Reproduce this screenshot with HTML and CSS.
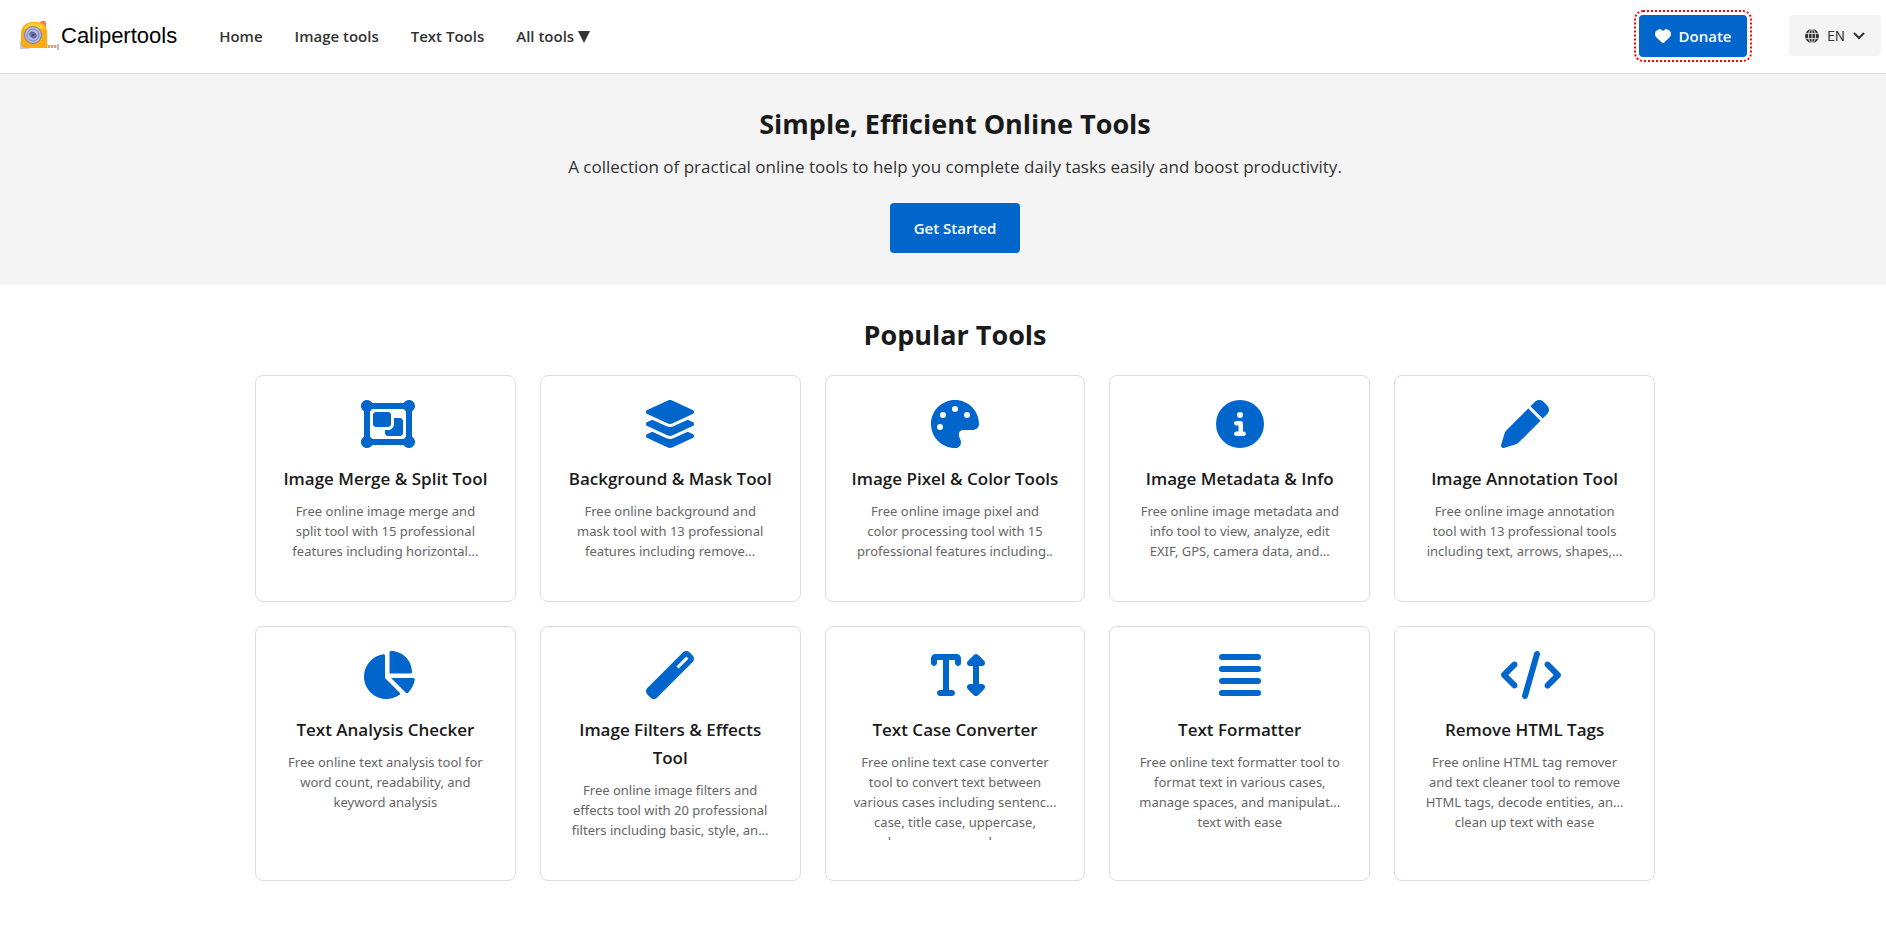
FILE: index.html
```html
<!DOCTYPE html>
<html lang="en">
<head>
  <meta charset="UTF-8" />
  <meta name="viewport" content="width=device-width, initial-scale=1" />
  <title>Calipertools</title>
  <link rel="stylesheet" href="styles.css">
</head>
<body>
  <header class="header">
    <a class="logo" href="#">
      <svg class="logo-icon" viewBox="0 0 40 30" aria-hidden="true">
        <rect x="20" y="0" width="6" height="8" rx="2" fill="#ff7058" />
        <path d="M0 20h7l2 6v2H0z" fill="#c3c6ec" />
        <path d="M1 14C1 5 6 1 13 1h4c6 0 10 4 10 10v10c0 3 2 4 5 4v2H6c-3 0-5-2-5-5z" fill="#fcab12" />
        <path d="M4 8C6 3 9 2 14 2h3c4 0 7 2 8 6z" fill="#ffd02d" />
        <rect x="27" y="24" width="11" height="3" fill="#ffdd9b" />
        <path d="M29 24v3M32 24v3M35 24v3" stroke="#8c7560" stroke-width="1" />
        <rect x="37" y="23" width="2" height="6" fill="#b5b9e6" />
        <circle cx="13" cy="14" r="9" fill="#7b80ad" />
        <circle cx="13" cy="14" r="8" fill="#b2b7e2" />
        <circle cx="13" cy="14" r="6" fill="none" stroke="#858bbb" stroke-width="1" />
        <ellipse cx="13" cy="14" rx="4" ry="3" transform="rotate(35 13 14)" fill="#646b9d" />
        <circle cx="13" cy="14" r="1" fill="#343958" />
      </svg>
      <span class="logo-text">Calipertools</span>
    </a>

    <nav class="nav">
      <a href="#">Home</a>
      <a href="#">Image tools</a>
      <a href="#">Text Tools</a>
      <a href="#">All tools <svg class="triangle" viewBox="0 0 12 12" aria-hidden="true"><path d="M0 0h12L6 12z" /></svg></a>
    </nav>

    <div class="actions">
      <a class="donate" href="#">
        <svg viewBox="0 0 512 512" aria-hidden="true"><path d="M47.6 300.4L228.3 469.1c7.5 7 17.4 10.9 27.7 10.9s20.2-3.9 27.7-10.9L464.4 300.4c30.4-28.3 47.6-68 47.6-109.5v-5.8c0-69.9-50.5-129.5-119.4-141C347 36.5 300.6 51.4 268 84L256 96 244 84c-32.6-32.6-79-47.5-124.6-39.9C50.5 55.6 0 115.2 0 185.1v5.8c0 41.5 17.2 81.2 47.6 109.5z" /></svg>
        Donate
      </a>
      <button class="lang" type="button">
        <svg class="globe" viewBox="0 0 16 16" aria-hidden="true">
          <circle cx="8" cy="8" r="8" fill="#333" />
          <g fill="none" stroke="#f4f4f4" stroke-width="1">
            <ellipse cx="8" cy="8" rx="4" ry="8" />
            <path d="M8 0v16M0 5h16M0 11h16" />
          </g>
        </svg>
        EN
        <svg class="chevron" viewBox="0 0 12 8" aria-hidden="true"><path d="M1 1l5 5 5-5" /></svg>
      </button>
    </div>
  </header>

  <section class="hero">
    <h1>Simple, Efficient Online Tools</h1>
    <p>A collection of practical online tools to help you complete daily tasks easily and boost productivity.</p>
    <a class="start" href="#tools">Get Started</a>
  </section>

  <main class="tools" id="tools">
    <h2>Popular Tools</h2>
    <div class="grid">
      <a class="card" href="#">
        <span class="icon"><svg viewBox="0 0 576 512"><path d="M32 119.4C12.9 108.4 0 87.7 0 64C0 28.7 28.7 0 64 0c23.7 0 44.4 12.9 55.4 32H456.6C467.6 12.9 488.3 0 512 0c35.3 0 64 28.7 64 64c0 23.7-12.9 44.4-32 55.4V392.6c19.1 11.1 32 31.7 32 55.4c0 35.3-28.7 64-64 64c-23.7 0-44.4-12.9-55.4-32H119.4c-11.1 19.1-31.7 32-55.4 32c-35.3 0-64-28.7-64-64c0-23.7 12.9-44.4 32-55.4V119.4zM119.4 96c-5.6 9.7-13.7 17.8-23.4 23.4V392.6c9.7 5.6 17.8 13.7 23.4 23.4H456.6c5.6-9.7 13.7-17.8 23.4-23.4V119.4c-9.7-5.6-17.8-13.7-23.4-23.4H119.4zM128 160c0-17.7 14.3-32 32-32H288c17.7 0 32 14.3 32 32v96c0 17.7-14.3 32-32 32H160c-17.7 0-32-14.3-32-32V160zM256 320h32c35.3 0 64-28.7 64-64V192h64c17.7 0 32 14.3 32 32V352c0 17.7-14.3 32-32 32H288c-17.7 0-32-14.3-32-32V320z" /></svg></span>
        <h3>Image Merge &amp; Split Tool</h3>
        <p>Free online image merge and<br>split tool with 15 professional<br>features including horizontal...</p>
      </a>

      <a class="card" href="#">
        <span class="icon"><svg viewBox="32 0 512 512"><path d="M264.5 5.2c14.9-6.9 32.1-6.9 47 0l218.6 101c8.5 3.9 13.9 12.4 13.9 21.8s-5.4 17.9-13.9 21.8l-218.6 101c-14.9 6.9-32.1 6.9-47 0L45.9 149.8C37.4 145.8 32 137.3 32 128s5.4-17.9 13.9-21.8L264.5 5.2zM476.9 209.6l53.2 24.6c8.5 3.9 13.9 12.4 13.9 21.8s-5.4 17.9-13.9 21.8l-218.6 101c-14.9 6.9-32.1 6.9-47 0L45.9 277.8C37.4 273.8 32 265.3 32 256s5.4-17.9 13.9-21.8l53.2-24.6 152 70.2c23.4 10.8 50.4 10.8 73.8 0l152-70.2zm-152 198.2l152-70.2 53.2 24.6c8.5 3.9 13.9 12.4 13.9 21.8s-5.4 17.9-13.9 21.8l-218.6 101c-14.9 6.9-32.1 6.9-47 0L45.9 405.8C37.4 401.8 32 393.3 32 384s5.4-17.9 13.9-21.8l53.2-24.6 152 70.2c23.4 10.8 50.4 10.8 73.8 0z" /></svg></span>
        <h3>Background &amp; Mask Tool</h3>
        <p>Free online background and<br>mask tool with 13 professional<br>features including remove...</p>
      </a>

      <a class="card" href="#">
        <span class="icon"><svg viewBox="0 0 512 512"><path d="M512 256c0 .9 0 1.8 0 2.7c-.4 36.5-33.6 61.3-70.1 61.3H344c-26.5 0-48 21.5-48 48c0 3.4 .4 6.7 1 9.9c2.1 10.2 6.5 20 10.8 29.9c6.1 13.8 12.1 27.5 12.1 42c0 31.8-21.6 60.7-53.4 62c-3.5 .1-7 .2-10.6 .2C114.6 512 0 397.4 0 256S114.6 0 256 0S512 114.6 512 256zM128 288a32 32 0 1 0 -64 0 32 32 0 1 0 64 0zm0-96a32 32 0 1 0 0-64 32 32 0 1 0 0 64zM288 96a32 32 0 1 0 -64 0 32 32 0 1 0 64 0zm96 96a32 32 0 1 0 0-64 32 32 0 1 0 0 64z" /></svg></span>
        <h3>Image Pixel &amp; Color Tools</h3>
        <p>Free online image pixel and<br>color processing tool with 15<br>professional features including..</p>
      </a>

      <a class="card" href="#">
        <span class="icon"><svg viewBox="0 0 512 512"><path d="M256 512A256 256 0 1 0 256 0a256 256 0 1 0 0 512zM216 336h24V272H216c-13.3 0-24-10.7-24-24s10.7-24 24-24h48c13.3 0 24 10.7 24 24v88h8c13.3 0 24 10.7 24 24s-10.7 24-24 24H216c-13.3 0-24-10.7-24-24s10.7-24 24-24zm40-208a32 32 0 1 1 0 64 32 32 0 1 1 0-64z" /></svg></span>
        <h3>Image Metadata &amp; Info</h3>
        <p>Free online image metadata and<br>info tool to view, analyze, edit<br>EXIF, GPS, camera data, and...</p>
      </a>

      <a class="card" href="#">
        <span class="icon"><svg viewBox="0 0 512 512"><path d="M362.7 19.3L314.3 67.7 444.3 197.7l48.4-48.4c25-25 25-65.5 0-90.5L453.3 19.3c-25-25-65.5-25-90.5 0zm-71 71L58.6 323.5c-10.4 10.4-18 23.3-22.2 37.4L1 481.2C-1.5 489.7 .8 498.8 7 505s15.3 8.5 23.7 6.1l120.3-35.4c14.1-4.2 27-11.8 37.4-22.2L421.7 220.3 291.7 90.3z" /></svg></span>
        <h3>Image Annotation Tool</h3>
        <p>Free online image annotation<br>tool with 13 professional tools<br>including text, arrows, shapes,...</p>
      </a>

      <a class="card" href="#">
        <span class="icon"><svg viewBox="0 0 576 512"><path d="M304 240V16.6c0-9 7-16.6 16-16.6C443.7 0 544 100.3 544 224c0 9-7.6 16-16.6 16H304zM32 272C32 150.7 122.1 50.3 239 34.3c9.2-1.3 17 6.1 17 15.4V288L412.5 444.5c6.7 6.7 6.2 17.7-1.5 23.1C371.8 495.6 323.8 512 272 512C139.5 512 32 404.6 32 272zm526.4 16c9.3 0 16.6 7.8 15.4 17c-7.7 55.9-34.6 105.6-73.9 142.3c-6 5.6-15.4 5.2-21.2-.7L320 288H558.4z" /></svg></span>
        <h3>Text Analysis Checker</h3>
        <p>Free online text analysis tool for<br>word count, readability, and<br>keyword analysis</p>
      </a>

      <a class="card" href="#">
        <span class="icon"><svg viewBox="0 0 512 512"><path d="M14.1 463.3c-18.7-18.7-18.7-49.1 0-67.9L395.4 14.1c18.7-18.7 49.1-18.7 67.9 0l34.6 34.6c18.7 18.7 18.7 49.1 0 67.9L116.5 497.9c-18.7 18.7-49.1 18.7-67.9 0L14.1 463.3zM347.6 187.6l105-105L429.4 59.3l-105 105 23.3 23.3z" /></svg></span>
        <h3>Image Filters &amp; Effects Tool</h3>
        <p>Free online image filters and<br>effects tool with 20 professional<br>filters including basic, style, an...</p>
      </a>

      <a class="card" href="#">
        <span class="icon"><svg viewBox="0 0 576 512"><path d="M64 128V96h64l0 320H96c-17.7 0-32 14.3-32 32s14.3 32 32 32H224c17.7 0 32-14.3 32-32s-14.3-32-32-32H192l0-320h64v32c0 17.7 14.3 32 32 32s32-14.3 32-32V80c0-26.5-21.5-48-48-48H160 48C21.5 32 0 53.5 0 80v48c0 17.7 14.3 32 32 32s32-14.3 32-32zM502.6 41.4c-12.5-12.5-32.8-12.5-45.3 0l-64 64c-9.2 9.2-11.9 22.9-6.9 34.9s16.6 19.8 29.6 19.8h32V352H416c-12.9 0-24.6 7.8-29.6 19.8s-2.2 25.7 6.9 34.9l64 64c12.5 12.5 32.8 12.5 45.3 0l64-64c9.2-9.2 11.9-22.9 6.9-34.9s-16.6-19.8-29.6-19.8H512V160h32c12.9 0 24.6-7.8 29.6-19.8s2.2-25.7-6.9-34.9l-64-64z" /></svg></span>
        <h3>Text Case Converter</h3>
        <p>Free online text case converter<br>tool to convert text between<br>various cases including sentenc...<br>case, title case, uppercase,<br>lowercase, camel case</p>
      </a>

      <a class="card" href="#">
        <span class="icon"><svg viewBox="-32 0 512 512"><path d="M32 32H416a32 32 0 0 1 0 64H32a32 32 0 0 1 0-64zm0 128H416a32 32 0 0 1 0 64H32a32 32 0 0 1 0-64zm0 128H416a32 32 0 0 1 0 64H32a32 32 0 0 1 0-64zm0 128H416a32 32 0 0 1 0 64H32a32 32 0 0 1 0-64z" /></svg></span>
        <h3>Text Formatter</h3>
        <p>Free online text formatter tool to<br>format text in various cases,<br>manage spaces, and manipulat...<br>text with ease</p>
      </a>

      <a class="card" href="#">
        <span class="icon"><svg viewBox="0 0 640 512"><path d="M392.8 1.2c-17-4.9-34.7 5-39.6 22l-128 448c-4.9 17 5 34.7 22 39.6s34.7-5 39.6-22l128-448c4.9-17-5-34.7-22-39.6zm80.6 120.1c-12.5 12.5-12.5 32.8 0 45.3L562.7 256l-89.4 89.4c-12.5 12.5-12.5 32.8 0 45.3s32.8 12.5 45.3 0l112-112c12.5-12.5 12.5-32.8 0-45.3l-112-112c-12.5-12.5-32.8-12.5-45.3 0zm-306.7 0c-12.5-12.5-32.8-12.5-45.3 0l-112 112c-12.5 12.5-12.5 32.8 0 45.3l112 112c12.5 12.5 32.8 12.5 45.3 0s12.5-32.8 0-45.3L77.3 256l89.4-89.4c12.5-12.5 12.5-32.8 0-45.3z" /></svg></span>
        <h3>Remove HTML Tags</h3>
        <p>Free online HTML tag remover<br>and text cleaner tool to remove<br>HTML tags, decode entities, an...<br>clean up text with ease</p>
      </a>
    </div>
  </main>
</body>
</html>
```

FILE: styles.css
```css
:root {
  --blue: #0066cc;
  --text: #333;
  --heading: #1a1a1a;
  --grey: #f4f4f4;
  font-family: "Segoe UI", "Open Sans", "Noto Sans", sans-serif;
}

* {
  box-sizing: border-box;
  margin: 0;
  padding: 0;
}

body {
  background: #fff;
  color: var(--text);
}

a {
  color: inherit;
  text-decoration: none;
}

/* Header */
.header {
  height: 74px;
  display: flex;
  align-items: center;
  padding: 0 5px 2px 20px;
  border-bottom: 1px solid #ddd;
}

.logo {
  display: flex;
  align-items: center;
  gap: 1px;
}

.logo-icon {
  width: 40px;
  height: 30px;
}

.logo-text {
  font-family: "Liberation Sans", Arial, sans-serif;
  font-size: 22px;
  line-height: 30px;
  color: #000;
}

.nav {
  display: flex;
  gap: 32px;
  margin-left: 42px;
  font-size: 15px;
  font-weight: 600;
}

.triangle {
  width: 12px;
  height: 12px;
  vertical-align: -1px;
  fill: var(--text);
}

.actions {
  display: flex;
  align-items: center;
  gap: 42px;
  margin-left: auto;
}

.donate {
  display: flex;
  align-items: center;
  justify-content: center;
  gap: 8px;
  min-width: 108px;
  height: 42px;
  border-radius: 4px;
  outline: 2px dotted #f00;
  outline-offset: 3px;
  background: var(--blue);
  color: #fff;
  font-size: 15px;
  font-weight: 600;
}

.donate svg {
  width: 16px;
  height: 16px;
  fill: #fff;
}

.lang {
  display: flex;
  align-items: center;
  justify-content: center;
  gap: 8px;
  min-width: 92px;
  height: 41px;
  border: none;
  border-radius: 4px;
  background: var(--grey);
  color: var(--text);
  font-family: Inter, sans-serif;
  font-size: 13px;
  cursor: pointer;
}

.globe {
  width: 14px;
  height: 14px;
}

.chevron {
  width: 12px;
  height: 8px;
  fill: none;
  stroke: var(--text);
  stroke-width: 2;
}

/* Hero */
.hero {
  display: flex;
  flex-direction: column;
  align-items: center;
  padding: 32px 0 32px 24px;
  background: var(--grey);
  text-align: center;
}

h1,
h2 {
  font-size: 27px;
  line-height: 36px;
  font-weight: 700;
  color: var(--heading);
}

.hero p {
  margin: 10px 0 22px;
  font-size: 17px;
  line-height: 29px;
}

.start {
  padding: 0 24px;
  border-radius: 4px;
  background: var(--blue);
  color: #fff;
  font-size: 15px;
  line-height: 50px;
  font-weight: 600;
}

/* Tools */
.tools {
  padding: 32px 0 32px 24px;
}

h2 {
  margin-bottom: 22px;
  text-align: center;
}

.grid {
  display: grid;
  grid-template-columns: repeat(5, 1fr);
  gap: 24px;
  max-width: 1400px;
  margin: 0 auto;
}

.card {
  display: flex;
  flex-direction: column;
  align-items: center;
  padding: 24px;
  border: 1px solid #ddd;
  border-radius: 8px;
  text-align: center;
}

.icon {
  width: 48px;
  height: 48px;
  margin-bottom: 17px;
}

/* wide glyphs run past the right edge of the 48px box */
.icon svg {
  display: block;
  height: 48px;
  fill: var(--blue);
}

h3 {
  margin-bottom: 8px;
  font-size: 17px;
  line-height: 28px;
  font-weight: 600;
  color: var(--heading);
}

.card p {
  flex: 1 0 60px;
  height: 60px;
  margin-bottom: 16px;
  overflow: hidden;
  font-family: "Segoe UI", "Noto Sans", sans-serif;
  font-size: 13px;
  line-height: 20px;
  color: #666;
  white-space: nowrap;
}
```
